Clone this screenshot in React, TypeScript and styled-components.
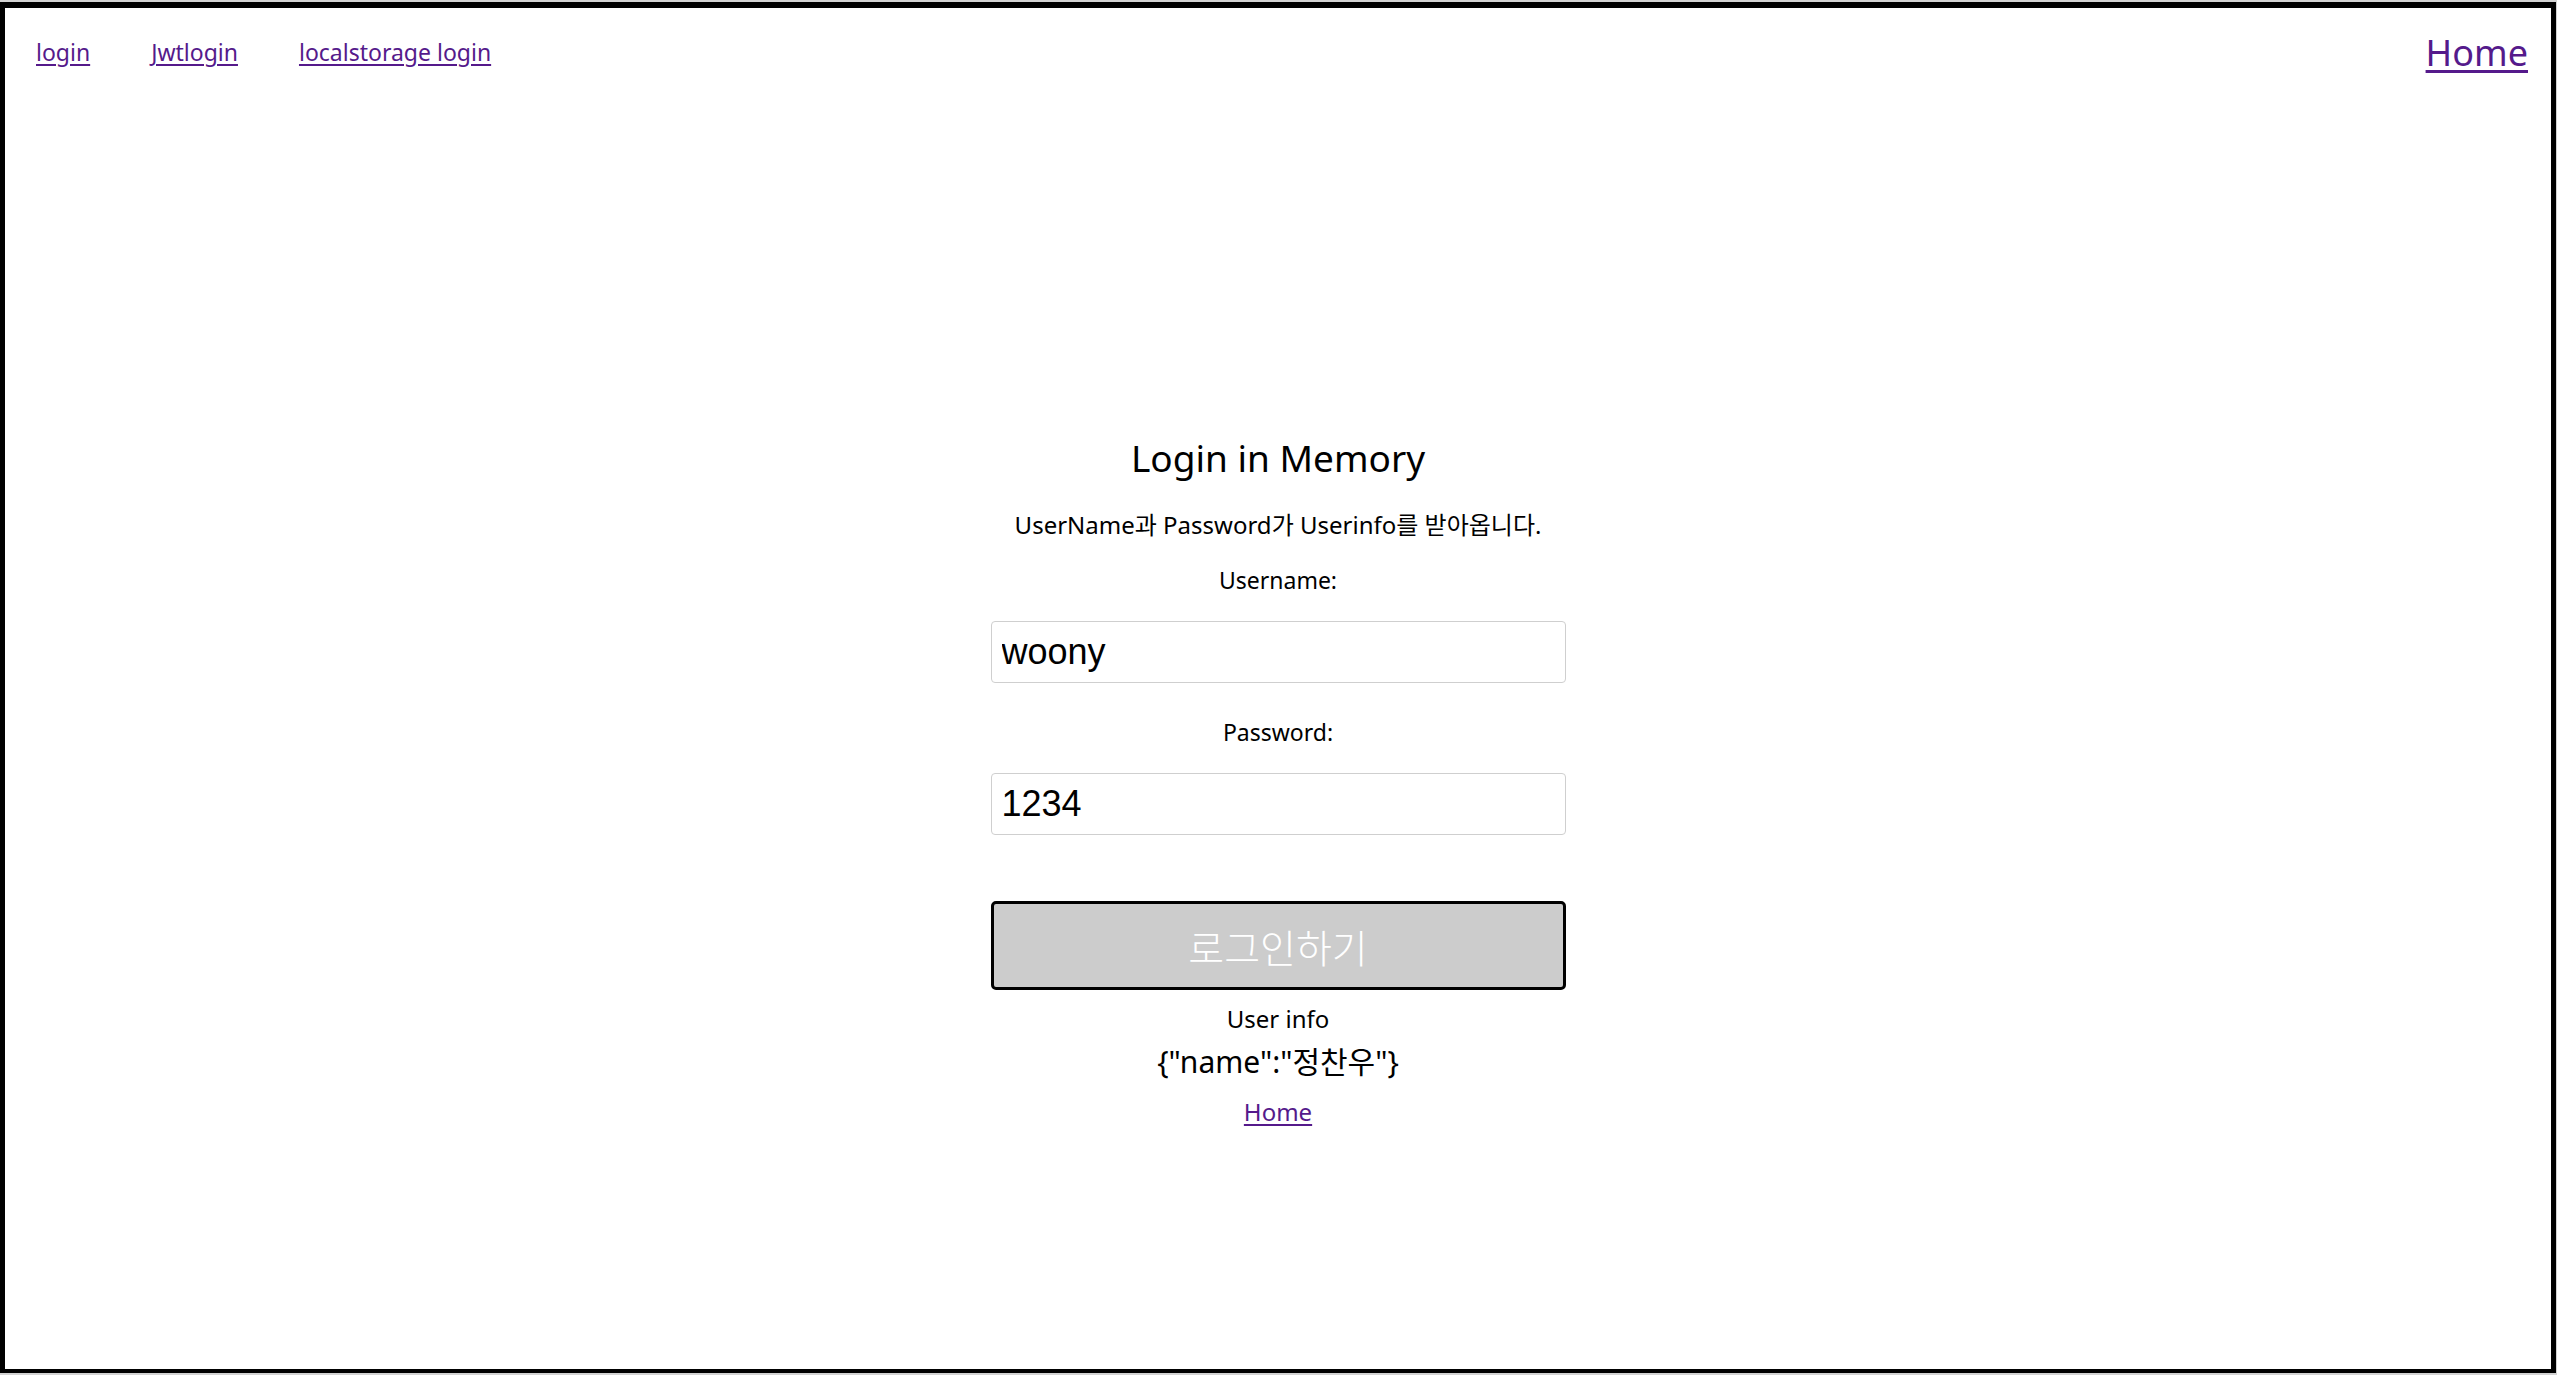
import React from "react";
import styled, { createGlobalStyle } from "styled-components";

const GlobalStyle = createGlobalStyle`
  html, body {
    margin: 0;
    padding: 0;
    background: #d2d2d2;
  }
  body {
    font-family: "Noto Sans", "Noto Sans CJK KR", sans-serif;
    color: #000;
  }
`;

const Frame = styled.div`
  box-sizing: border-box;
  margin: 2px 1px 0 0;
  height: 1371px;
  background: #fff;
  border-style: solid;
  border-color: #000;
  border-width: 6px 5px 4px 5px;
  display: flex;
  flex-direction: column;
`;

const TopBar = styled.header`
  height: 88px;
  display: flex;
  align-items: center;
  justify-content: space-between;
  padding: 0 23px 0 31px;
`;

const NavList = styled.nav`
  display: flex;
  align-items: center;
  gap: 61px;
`;

const Link = styled.a<{ $size: number }>`
  font-size: ${(p) => p.$size}px;
  color: #551a8b;
  text-decoration: underline;
  text-underline-offset: ${(p) => Math.round(p.$size * 0.12)}px;
  cursor: pointer;
`;

const Main = styled.main`
  display: flex;
  flex-direction: column;
  align-items: center;
  padding-top: 339px;
`;

const Title = styled.h2`
  margin: 0;
  font-size: 37px;
  font-weight: 400;
  line-height: 46px;
`;

const Text = styled.p<{ $size?: number; $lh?: number; $mt: number }>`
  margin: ${(p) => p.$mt}px 0 0;
  font-size: ${(p) => p.$size ?? 24}px;
  line-height: ${(p) => p.$lh ?? 36}px;
`;

const Input = styled.input<{ $mt: number }>`
  box-sizing: border-box;
  margin-top: ${(p) => p.$mt}px;
  width: 575px;
  height: 62px;
  padding: 0 10px;
  border: 1.5px solid #cfcfcf;
  border-radius: 4px;
  font-family: "Liberation Sans", Arial, sans-serif;
  font-size: 36px;
  color: #000;
  background: #fff;
  outline: none;
`;

const Button = styled.button`
  box-sizing: border-box;
  margin-top: 66px;
  width: 575px;
  height: 89px;
  border: 3px solid #000;
  border-radius: 5px;
  background: #cccccc;
  color: #fff;
  font-family: "Noto Sans CJK KR", "Noto Sans", sans-serif;
  font-size: 39px;
  font-weight: 300;
  cursor: pointer;
`;

const HomeWrap = styled.div`
  margin-top: 12px;
  line-height: 36px;
`;

export default function App() {
  return (
    <>
      <GlobalStyle />
      <Frame>
        <TopBar>
          <NavList>
            <Link $size={23}>login</Link>
            <Link $size={23}>Jwtlogin</Link>
            <Link $size={23}>localstorage login</Link>
          </NavList>
          <Link $size={36}>Home</Link>
        </TopBar>
        <Main>
          <Title>Login in Memory</Title>
          <Text $mt={26}>UserName과 Password가 Userinfo를 받아옵니다.</Text>
          <Text $mt={19} $size={23}>Username:</Text>
          <Input $mt={23} defaultValue="woony" />
          <Text $mt={31} $size={23}>Password:</Text>
          <Input $mt={23} defaultValue="1234" />
          <Button>로그인하기</Button>
          <Text $mt={11}>User info</Text>
          <Text $mt={5} $size={30} $lh={40}>{'{"name":"정찬우"}'}</Text>
          <HomeWrap>
            <Link $size={24}>Home</Link>
          </HomeWrap>
        </Main>
      </Frame>
    </>
  );
}
